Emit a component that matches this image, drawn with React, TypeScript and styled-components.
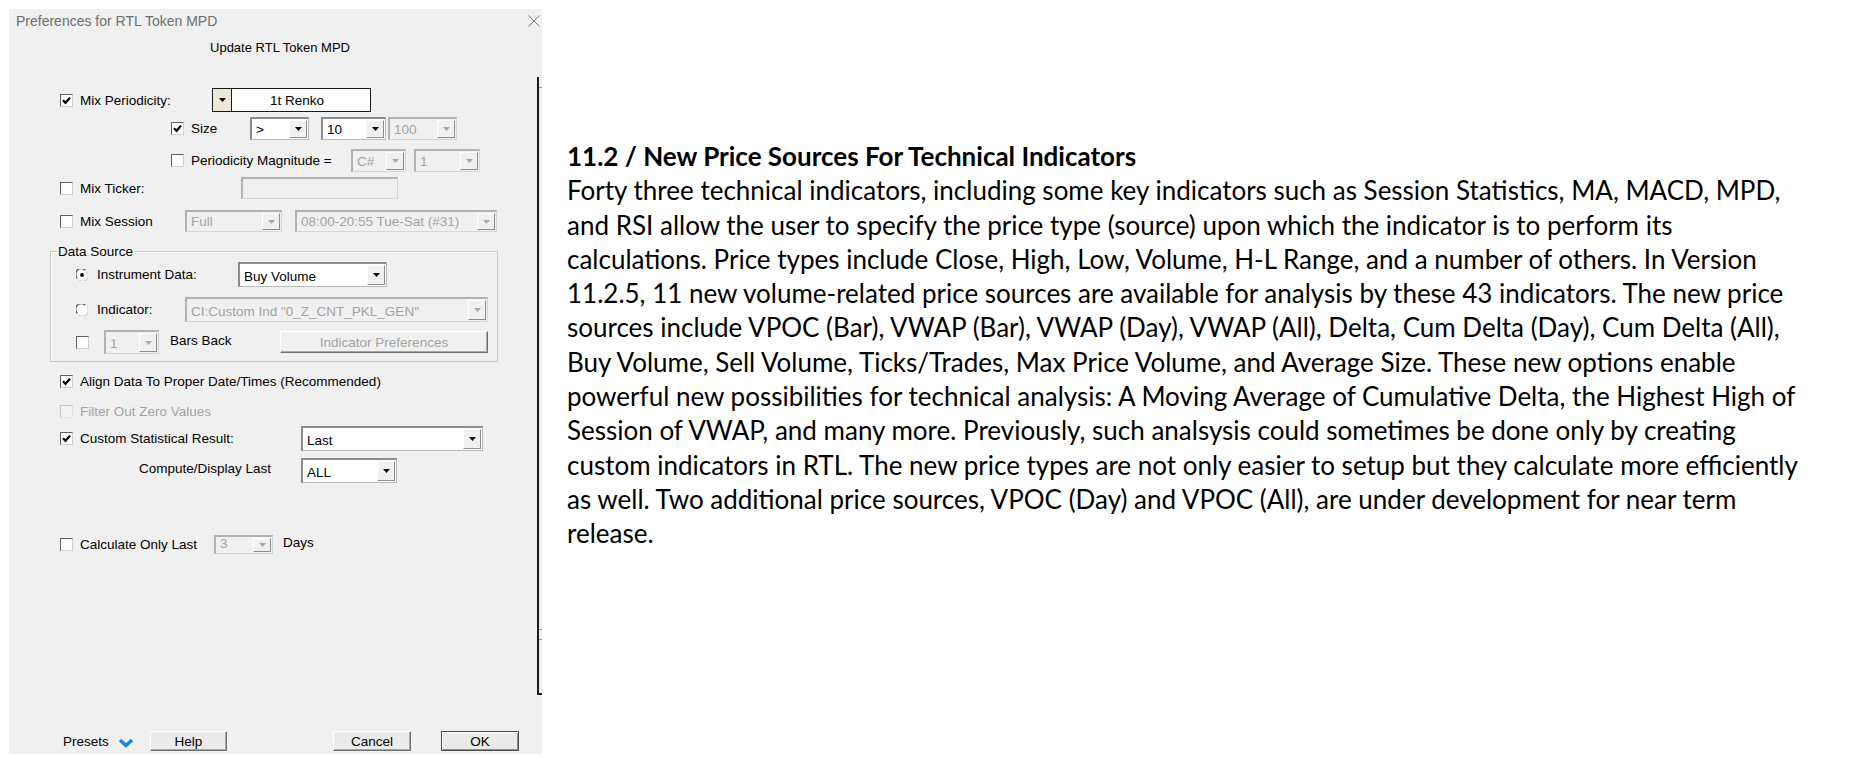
import React from 'react';
import styled, { createGlobalStyle } from 'styled-components';

const GlobalStyle = createGlobalStyle`
  html, body {
    margin: 0;
    padding: 0;
    background: #fff;
  }
  body {
    font-family: 'Liberation Sans', Arial, sans-serif;
  }
`;

const lines = [
  'Forty three technical indicators, including some key indicators such as Session Statistics, MA, MACD, MPD,',
  'and RSI allow the user to specify the price type (source) upon which the indicator is to perform its',
  'calculations. Price types include Close, High, Low, Volume, H-L Range, and a number of others. In Version',
  '11.2.5, 11 new volume-related price sources are available for analysis by these 43 indicators. The new price',
  'sources include VPOC (Bar), VWAP (Bar), VWAP (Day), VWAP (All), Delta, Cum Delta (Day), Cum Delta (All),',
  'Buy Volume, Sell Volume, Ticks/Trades, Max Price Volume, and Average Size. These new options enable',
  'powerful new possibilities for technical analysis: A Moving Average of Cumulative Delta, the Highest High of',
  'Session of VWAP, and many more. Previously, such analsysis could sometimes be done only by creating',
  'custom indicators in RTL. The new price types are not only easier to setup but they calculate more efficiently',
  'as well. Two additional price sources, VPOC (Day) and VPOC (All), are under development for near term',
  'release.',
];

// ---- small drawings ----

const Arrow = ({ disabled }: { disabled?: boolean }) => (
  <svg width="7" height="4" viewBox="0 0 7 4">
    <polygon points="0,0 7,0 3.5,4" fill={disabled ? '#a8a8a8' : '#000'} />
  </svg>
);

const CheckMark = () => (
  <svg width="9" height="9" viewBox="0 0 9 9">
    <path d="M1 4.3 L3.5 6.8 L8 1.6" stroke="#000" strokeWidth="2.2" fill="none" />
  </svg>
);

const Radio = ({ checked }: { checked?: boolean }) => (
  <RadioWrap>
    <svg width="12" height="12" viewBox="0 0 12 12">
      <circle cx="6" cy="6" r="5.5" fill="#fff" />
      <path d="M1.3 9.2 A5.2 5.2 0 0 1 9.2 1.3" stroke="#5e5e5e" strokeWidth="1.4" fill="none" />
      <path d="M10.7 2.8 A5.2 5.2 0 0 1 2.8 10.7" stroke="#d4d4d4" strokeWidth="1.2" fill="none" />
      {checked && <circle cx="6" cy="6" r="1.9" fill="#000" />}
    </svg>
  </RadioWrap>
);

const Chevron = () => (
  <svg width="16" height="10" viewBox="0 0 16 10">
    <path d="M2 2 L8 7.5 L14 2" stroke="#1d87df" strokeWidth="3.6" fill="none" strokeLinejoin="round" />
  </svg>
);

const CloseX = () => (
  <svg width="12" height="12" viewBox="0 0 12 12">
    <path d="M0.5 0.5 L11.5 11.5 M11.5 0.5 L0.5 11.5" stroke="#7b7b7b" strokeWidth="1" />
  </svg>
);

// ---- controls ----

function Check({ checked, disabled }: { checked?: boolean; disabled?: boolean }) {
  return <CheckBox $disabled={disabled}>{checked && <CheckMark />}</CheckBox>;
}

function Combo({
  value,
  w,
  h = 23,
  disabled,
}: {
  value: string;
  w: number;
  h?: number;
  disabled?: boolean;
}) {
  return (
    <ComboBox $w={w} $h={h} $disabled={disabled}>
      <ComboText $disabled={disabled}>{value}</ComboText>
      <ComboArrow>
        <Arrow disabled={disabled} />
      </ComboArrow>
    </ComboBox>
  );
}

export default function App() {
  return (
    <>
      <GlobalStyle />
      <Page>
        <Dialog>
          <TitleBar>
            <Title>Preferences for RTL Token MPD</Title>
            <CloseButton>
              <CloseX />
            </CloseButton>
          </TitleBar>

          <Body>
            <Form>
              <Heading>Update RTL Token MPD</Heading>

              <Row $h={24} $mt={31} $x={51}>
                <Check checked />
                <Label $w={132}>Mix Periodicity:</Label>
                <PeriodButton>
                  <Arrow />
                </PeriodButton>
                <PeriodField>1t Renko</PeriodField>
              </Row>

              <Row $h={23} $mt={5} $x={162}>
                <Check checked />
                <Label $w={59}>Size</Label>
                <Combo value=">" w={59} />
                <Gap $w={12} />
                <Combo value="10" w={65} />
                <Gap $w={2} />
                <Combo value="100" w={69} disabled />
              </Row>

              <Row $h={23} $mt={9} $x={162}>
                <Check />
                <Label $w={160}>Periodicity Magnitude =</Label>
                <Combo value="C#" w={55} disabled />
                <Gap $w={8} />
                <Combo value="1" w={66} disabled />
              </Row>

              <Row $h={22} $mt={5} $x={51}>
                <Check />
                <Label $w={161}>Mix Ticker:</Label>
                <TextField $w={157} />
              </Row>

              <Row $h={22} $mt={11} $x={51}>
                <Check />
                <Label $w={105}>Mix Session</Label>
                <Combo value="Full" w={97} h={22} disabled />
                <Gap $w={13} />
                <Combo value="08:00-20:55 Tue-Sat (#31)" w={202} h={22} disabled />
              </Row>

              <Group>
                <Legend>Data Source</Legend>
                <Row $h={25} $mt={3} $x={25}>
                  <Radio checked />
                  <Label $w={141}>Instrument Data:</Label>
                  <Combo value="Buy Volume" w={149} h={25} />
                </Row>
                <Row $h={25} $mt={10} $x={25}>
                  <Radio />
                  <Label $w={88}>Indicator:</Label>
                  <Combo value='CI:Custom Ind "0_Z_CNT_PKL_GEN"' w={303} h={25} disabled />
                </Row>
                <Row $h={24} $mt={8} $x={25}>
                  <Check />
                  <Gap $w={8} />
                  <Combo value="1" w={55} h={24} disabled />
                  <Gap $w={11} />
                  <Label $w={110} $up>
                    Bars Back
                  </Label>
                  <Button $w={208} $h={22} $disabled>
                    Indicator Preferences
                  </Button>
                </Row>
              </Group>

              <Row $h={16} $mt={11} $x={51}>
                <Check checked />
                <Label>Align Data To Proper Date/Times (Recommended)</Label>
              </Row>

              <Row $h={16} $mt={14} $x={51}>
                <Check disabled />
                <Label $disabled>Filter Out Zero Values</Label>
              </Row>

              <Row $h={25} $mt={7} $x={51}>
                <Check checked />
                <Label $w={221}>Custom Statistical Result:</Label>
                <Combo value="Last" w={182} h={25} />
              </Row>

              <Row $h={25} $mt={7} $x={130}>
                <Label $w={162} $up>
                  Compute/Display Last
                </Label>
                <Combo value="ALL" w={96} h={25} />
              </Row>

              <Row $h={19} $mt={52} $x={51}>
                <Check />
                <Label $w={134}>Calculate Only Last</Label>
                <Combo value="3" w={59} h={19} disabled />
                <Gap $w={10} />
                <Label $up>Days</Label>
              </Row>

              <Footer>
                <PresetsLabel>Presets</PresetsLabel>
                <ChevronSlot>
                  <Chevron />
                </ChevronSlot>
                <Button $w={77}>Help</Button>
                <Gap $w={106} />
                <Button $w={78}>Cancel</Button>
                <Gap $w={30} />
                <Button $w={78} $default>
                  OK
                </Button>
              </Footer>
            </Form>

            <EdgeStrip>
              <EdgeCap $h={11} />
              <EdgeFill />
              <EdgeCap $h={10} $bottom />
              <EdgeCap $h={54} $bottom />
            </EdgeStrip>
          </Body>
        </Dialog>

        <Article>
          <ArticleTitle>11.2 / New Price Sources For Technical Indicators</ArticleTitle>
          {lines.map((l) => (
            <Line key={l}>{l}</Line>
          ))}
        </Article>
      </Page>
    </>
  );
}

// ---- layout ----

const Page = styled.div`
  display: flex;
  align-items: flex-start;
  min-height: 758px;
`;

const Dialog = styled.div`
  width: 533px;
  height: 745px;
  margin: 9px 0 0 9px;
  background: #f0f0f0;
  display: flex;
  flex-direction: column;
  flex-shrink: 0;
  font-family: 'Liberation Sans', Arial, sans-serif;
  font-size: 13.5px;
  color: #000;
`;

const TitleBar = styled.div`
  height: 24px;
  display: flex;
  align-items: center;
  justify-content: space-between;
  padding: 0 1px 0 7px;
`;

const Title = styled.span`
  font-size: 14px;
  color: #6f6f6f;
`;

const CloseButton = styled.span`
  display: flex;
  width: 14px;
  height: 14px;
  align-items: center;
  justify-content: center;
`;

const Body = styled.div`
  flex: 1;
  display: flex;
`;

const Form = styled.div`
  flex: 1;
  display: flex;
  flex-direction: column;
`;

const Heading = styled.div`
  height: 18px;
  margin-top: 6px;
  line-height: 18px;
  font-size: 13px;
  text-align: center;
  padding-left: 14px;
`;

const Row = styled.div<{ $h: number; $mt: number; $x: number }>`
  display: flex;
  align-items: center;
  height: ${(p) => p.$h}px;
  margin-top: ${(p) => p.$mt}px;
  padding-left: ${(p) => p.$x}px;
`;

const Gap = styled.span<{ $w: number }>`
  width: ${(p) => p.$w}px;
  flex-shrink: 0;
`;

const Label = styled.span<{ $w?: number; $disabled?: boolean; $up?: boolean }>`
  ${(p) => (p.$w ? `width: ${p.$w}px;` : '')}
  flex-shrink: 0;
  white-space: nowrap;
  color: ${(p) => (p.$disabled ? '#a3a3a3' : '#000')};
  ${(p) => (p.$up ? 'margin-top: -4px;' : '')}
`;

const CheckBox = styled.span<{ $disabled?: boolean }>`
  width: 13px;
  height: 13px;
  box-sizing: border-box;
  margin-right: 7px;
  flex-shrink: 0;
  display: flex;
  align-items: center;
  justify-content: center;
  background: ${(p) => (p.$disabled ? '#f3f3f3' : '#fff')};
  border-style: solid;
  border-width: 1px;
  border-color: ${(p) => (p.$disabled ? '#c4c4c4 #e4e4e4 #e4e4e4 #c4c4c4' : '#5f5f5f #d0d0d0 #d0d0d0 #5f5f5f')};
`;

const RadioWrap = styled.span`
  display: flex;
  width: 12px;
  height: 12px;
  margin-right: 9px;
  flex-shrink: 0;
`;

const ComboBox = styled.div<{ $w: number; $h: number; $disabled?: boolean }>`
  width: ${(p) => p.$w}px;
  height: ${(p) => p.$h}px;
  box-sizing: border-box;
  flex-shrink: 0;
  display: flex;
  align-items: stretch;
  border-style: solid;
  border-width: 2px 1px 1px 2px;
  border-color: ${(p) =>
    p.$disabled ? '#b2b2b2 #d6d6d6 #d6d6d6 #b2b2b2' : '#8c8c8c #b9b9b9 #b9b9b9 #8c8c8c'};
  background: ${(p) => (p.$disabled ? '#f0f0f0' : '#fff')};
`;

const ComboText = styled.span<{ $disabled?: boolean }>`
  flex: 1;
  display: flex;
  align-items: flex-end;
  padding: 0 0 2px 4px;
  white-space: nowrap;
  overflow: hidden;
  color: ${(p) => (p.$disabled ? '#a3a3a3' : '#000')};
`;

const ComboArrow = styled.span`
  width: 16px;
  margin: 1px;
  flex-shrink: 0;
  display: flex;
  align-items: center;
  justify-content: center;
  background: #f0f0f0;
  border-style: solid;
  border-width: 1px;
  border-color: #fff #8e8e8e #8e8e8e #fff;
`;

const PeriodButton = styled.span`
  width: 19px;
  height: 24px;
  box-sizing: border-box;
  display: flex;
  align-items: center;
  justify-content: center;
  background: #ebe8d8;
  border: 1px solid #1a1a1a;
  border-right: none;
  flex-shrink: 0;
`;

const PeriodField = styled.span`
  width: 140px;
  height: 24px;
  box-sizing: border-box;
  display: flex;
  align-items: center;
  padding-left: 38px;
  background: #fff;
  border: 1px solid #1a1a1a;
  flex-shrink: 0;
`;

const TextField = styled.span<{ $w: number }>`
  width: ${(p) => p.$w}px;
  height: 22px;
  box-sizing: border-box;
  background: #f0f0f0;
  border-style: solid;
  border-width: 2px 1px 1px 2px;
  border-color: #b2b2b2 #d6d6d6 #d6d6d6 #b2b2b2;
`;

const Group = styled.fieldset`
  margin: 12px 0 0 41px;
  width: 448px;
  box-sizing: border-box;
  padding: 0 0 7px 0;
  border: 1px solid #c9c9c9;
  box-shadow: inset 1px 1px #fff;
  min-width: 0;
`;

const Legend = styled.legend`
  padding: 0 2px 0 1px;
  margin-left: 6px;
  line-height: 15px;
`;

const Button = styled.div<{ $w: number; $h?: number; $default?: boolean; $disabled?: boolean }>`
  width: ${(p) => p.$w}px;
  height: ${(p) => p.$h ?? 20}px;
  box-sizing: border-box;
  flex-shrink: 0;
  display: flex;
  align-items: center;
  justify-content: center;
  background: ${(p) => (p.$disabled ? '#f0f0f0' : '#ebebeb')};
  color: ${(p) => (p.$disabled ? '#a3a3a3' : '#000')};
  border-style: solid;
  border-width: 1px;
  border-color: ${(p) => (p.$default ? '#4a4a4a' : '#fff #6e6e6e #6e6e6e #fff')};
  box-shadow: ${(p) =>
    p.$default ? 'inset 1px 1px #fff, inset -1px -1px #8e8e8e' : 'inset -1px -1px #a8a8a8'};
`;

const Footer = styled.div`
  margin-top: auto;
  margin-bottom: 3px;
  height: 20px;
  display: flex;
  align-items: center;
  padding-left: 54px;
`;

const PresetsLabel = styled.span`
  width: 55px;
  flex-shrink: 0;
`;

const ChevronSlot = styled.span`
  display: flex;
  width: 32px;
  flex-shrink: 0;
  margin-top: 3px;
`;

const EdgeStrip = styled.div`
  width: 5px;
  height: 618px;
  margin-top: 44px;
  box-sizing: border-box;
  border-left: 2px solid #1c1c1c;
  border-bottom: 2px solid #1c1c1c;
  display: flex;
  flex-direction: column;
`;

const EdgeCap = styled.span<{ $h: number; $bottom?: boolean }>`
  height: ${(p) => p.$h}px;
  flex-shrink: 0;
  box-sizing: border-box;
  ${(p) => (p.$bottom ? 'border-top: 1px solid #9c9c9c;' : 'border-bottom: 1px solid #9c9c9c;')}
`;

const EdgeFill = styled.span`
  flex: 1;
`;

// ---- article ----

const Article = styled.article`
  margin-left: 25px;
  padding-top: 139px;
  font-family: Lato, 'Open Sans', sans-serif;
  font-size: 26px;
  line-height: 34.3px;
  color: #000;
`;

const ArticleTitle = styled.h2`
  margin: 0;
  font-size: 26px;
  font-weight: 700;
  line-height: 34.3px;
`;

const Line = styled.div`
  white-space: nowrap;
`;
